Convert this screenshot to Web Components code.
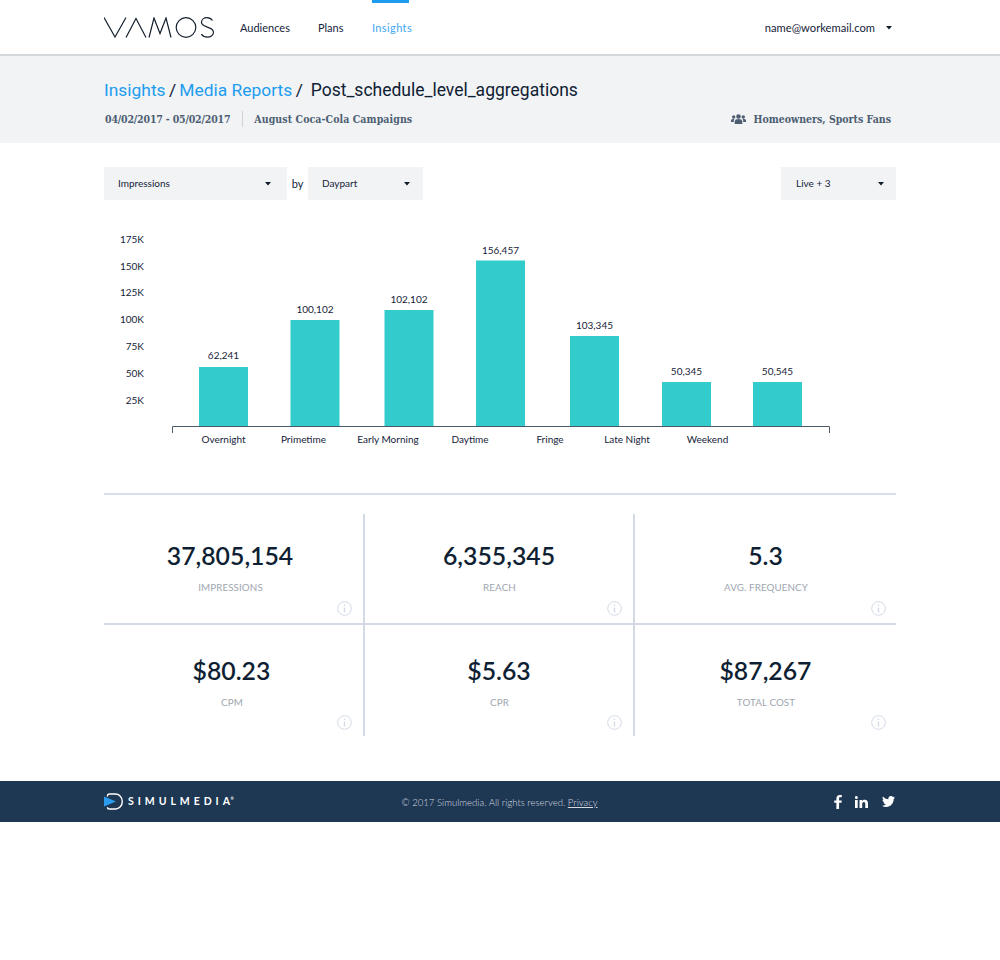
<!DOCTYPE html>
<html><head><meta charset="utf-8"><title>Vamos</title>
<style>
html,body{margin:0;padding:0;background:#fff}
body{font-family:Lato,"Liberation Sans",sans-serif;color:#0f1f33}
</style></head><body>
<app-header></app-header>
<page-title></page-title>
<main-panel>
  <control-bar></control-bar>
  <bar-chart></bar-chart>
  <stat-grid>
    <stat-cell value="37,805,154" label="IMPRESSIONS" shift="7"></stat-cell>
    <stat-cell value="6,355,345" label="REACH"></stat-cell>
    <stat-cell value="5.3" label="AVG. FREQUENCY" last></stat-cell>
    <stat-cell value="$80.23" label="CPM" shift="4" lower></stat-cell>
    <stat-cell value="$5.63" label="CPR" lower></stat-cell>
    <stat-cell value="$87,267" label="TOTAL COST" last lower></stat-cell>
  </stat-grid>
</main-panel>
<app-footer></app-footer>
<script>
const caret=`<svg width="6" height="4" viewBox="0 0 6 4" style="display:block;flex:none"><path d="M0 0h6L3 3.500z" fill="#111c2b"/></svg>`;
function def(name,html){
  customElements.define(name,class extends HTMLElement{
    constructor(){super();this.attachShadow({mode:'open'}).innerHTML=typeof html==='function'?html(this):html;}
  });
}
def('app-header',`<style>
:host{display:block;height:54px;border-bottom:2px solid #d5d8da;background:#fff}
.w{height:54px;margin:0 104px;display:flex;align-items:stretch;font:11px/1 Lato,sans-serif;color:#16233a;width:792px}
svg.logo{display:block;margin-top:17px;width:110px;height:21px;flex:none}
nav{display:flex;margin-left:26px}
nav a{display:block;padding-top:22px;margin-right:28px;position:relative;height:32px;box-sizing:border-box;font-size:11px}
nav a.on{color:#3ea6f2;letter-spacing:.38px;margin-left:.5px}
nav a.on::before{content:"";position:absolute;left:0;width:37px;top:0;height:3px;background:#1e9cf0}
.u{margin-left:auto;display:flex;align-items:center;gap:11px;height:56px;padding-right:4px;font-size:11.2px;box-sizing:border-box}
</style><div class="w">
<svg class="logo" viewBox="0 0 110 21" fill="none" stroke="#14202f" stroke-width="1.2"><path d="M0 .5l11 19.500L22 .5"/><path d="M22 20.500L32 1.500l10 19"/><path d="M45 20.500L50 1l6 15.500L62 1l5 19.500"/><circle cx="82" cy="10.500" r="9.800"/><path d="M108.500 3.500c-1.500-2-3.500-2.800-5.500-2.800-3 0-5.500 1.700-5.500 4.600 0 6.200 12 3.300 12 10 0 2.800-2.800 4.900-6 4.900-2.500 0-4.700-1-6.200-3"/></svg>
<nav><a>Audiences</a><a>Plans</a><a class="on">Insights</a></nav>
<div class="u"><span>name@workemail.com</span>${caret}</div></div>`);
def('page-title',`<style>
:host{display:block;background:#f1f3f5;height:87px;padding:0 104px}
.c{font:400 17.400px/21px Roboto,sans-serif;padding-top:24px;color:#0f2033;white-space:pre;height:21px}
.c a{color:#1e9cf0}
.c i{font-style:normal;margin:0 -.8px}
.c a+i+a{margin-left:-.5px}
.c b{font-weight:400;font-size:17.500px;margin-left:.1px}
.s{display:flex;align-items:center;margin-top:10px;font:bold 10.500px/16px "DejaVu Serif Condensed","DejaVu Serif",serif;font-stretch:condensed;color:#4d5e72;white-space:nowrap}
.d{padding-left:1px;padding-right:12px;border-right:1px solid #cdd2d8;letter-spacing:-.18px}
.a{margin-left:11px;letter-spacing:.08px}
.r{margin-left:auto;display:flex;align-items:center;gap:7px;padding-right:5px}
svg{display:block;flex:none}
</style>
<div class="c"><a>Insights</a> <i>/</i> <a>Media Reports</a> <i>/</i>  <b>Post_schedule_level_aggregations</b></div>
<div class="s"><span class="d">04/02/2017 - 05/02/2017</span><span class="a">August Coca-Cola Campaigns</span>
<span class="r"><svg width="15" height="10" viewBox="0 0 15 10" fill="#4d5e72"><circle cx="7.500" cy="2.500" r="2.300"/><path d="M3.700 10V7.500C3.700 5.800 5.500 5 7.500 5s3.800.8 3.800 2.500V10z"/><circle cx="2.700" cy="3" r="1.700"/><path d="M0 8V6.500C0 5.300 1.200 4.900 2.700 4.900c.3 0 .5 0 .7.100-.4.500-.6 1.200-.6 2V8z"/><circle cx="12.300" cy="3" r="1.700"/><path d="M15 8V6.500c0-1.200-1.200-1.600-2.700-1.600-.3 0-.5 0-.7.100.4.500.6 1.200.6 2V8z"/></svg><span>Homeowners, Sports Fans</span></span></div>`);
def('main-panel',`<style>:host{display:block;padding:24px 104px 0;box-sizing:border-box;height:638px}</style><slot></slot>`);
def('select-box',h=>`<style>
:host{display:flex;align-items:center;justify-content:space-between;box-sizing:border-box;height:33px;background:#f1f3f5;padding:0 ${h.getAttribute('pr')}px 0 ${h.getAttribute('pl')||14}px;font:10px/1 Lato,sans-serif;color:#16233a;width:${h.getAttribute('w')}px}
span{position:relative;top:-1px}
</style><span>${h.getAttribute('t')}</span>${caret}`);
def('control-bar',`<style>
:host{display:flex;align-items:center;font:11px/1 Lato,sans-serif;color:#16233a;height:33px}
.by{width:21px;text-align:center}
.sp{margin-left:auto}
</style><select-box w="183" pr="16" t="Impressions"></select-box><span class="by">by</span><select-box w="115" pr="13" t="Daypart"></select-box><span class="sp"></span><select-box w="115" pr="12" pl="15" t="Live + 3"></select-box>`);
(function(){
 const bars=[[199,367,'62,241',358.5],[290.500,320,'100,102',312.5],[384.500,310,'102,102',302.5],[476,260.500,'156,457',254],[570,336,'103,345',328.5],[662,382,'50,345',374.5],[753,382,'50,545',374.5]];
 const ys=[['175K',239],['150K',266],['125K',292.500],['100K',319],['75K',346.500],['50K',373.500],['25K',400]];
 const xs=[['Overnight',223.500],['Primetime',303.500],['Early Morning',388],['Daytime',470],['Fringe',550],['Late Night',627],['Weekend',707.500]];
 const Y=-200,X=-104;
 let s='';
 for(const[x,y,t,ty]of bars){s+=`<rect x="${x+X}" y="${y+Y}" width="49" height="${426-y}" fill="#33cccc"/><text x="${x+X+24.500}" y="${ty+Y}" text-anchor="middle">${t}</text>`}
 for(const[t,y]of ys)s+=`<text x="${144+X}" y="${y+Y+3.500}" text-anchor="end">${t}</text>`;
 for(const[t,x]of xs)s+=`<text x="${x+X}" y="${443+Y}" text-anchor="middle">${t}</text>`;
 s+=`<path d="M${172.500+X} ${433+Y}v-6.500h657v6.500" fill="none" stroke="#4b5a68" stroke-width="1"/>`;
 def('bar-chart',`<style>:host{display:block;height:293px;border-bottom:2px solid #dadeea}svg{display:block;font:10px Lato,sans-serif;fill:#16233a}</style><svg width="792" height="293" viewBox="0 0 792 293">${s}</svg>`);
})();
def('stat-grid',`<style>:host{display:grid;grid-template-columns:261px 270px 261px;grid-template-rows:111px 111px;margin-top:19px}</style><slot></slot>`);
def('stat-cell',h=>{
 const lower=h.hasAttribute('lower'),last=h.hasAttribute('last'),shift=h.getAttribute('shift')||0;
 return `<style>
:host{display:block;position:relative;box-sizing:border-box;text-align:center;${last?'':'border-right:2px solid #d3d9e5;'}${lower?'':'border-bottom:2px solid #d3d9e5;'}padding-right:${shift}px;padding-top:${lower?31:27}px}
.v{font:600 24.800px/30px Lato,sans-serif;color:#0f1f33}
.l{font:400 9.800px/12px Lato,sans-serif;color:#a0a6b0;margin-top:10px;letter-spacing:.1px;padding-left:1px}
svg{position:absolute;right:${last?10:11}px;bottom:${lower?6.5:7.5}px;display:block}
</style><div class="v">${h.getAttribute('value')}</div><div class="l">${h.getAttribute('label')}</div>
<svg width="15" height="15" viewBox="0 0 15 15" fill="none" stroke="#d3d9e5"><circle cx="7.500" cy="7.500" r="6.800"/><path d="M7.500 6.500v5M7.500 3.500v1.500" stroke-width="1.400"/></svg>`;
});
def('app-footer',`<style>
:host{display:flex;align-items:center;height:41px;background:#1e3752;padding:0 104px;color:#d5dbe1;font:300 9.600px/1 Lato,sans-serif;white-space:nowrap}
.logo{display:flex;align-items:center;gap:5px;width:300px;color:#fff;font:700 10.500px/1 Lato,sans-serif;letter-spacing:3.950px}
.logo i{font-style:normal;letter-spacing:0}
.m{flex:1;text-align:center;padding-top:2px}
.m u{text-decoration:underline}
.so{display:flex;align-items:center;gap:13.500px;width:300px;justify-content:flex-end;padding-right:1px}
svg{display:block;flex:none}
sup{font-size:4px;letter-spacing:0;vertical-align:top;margin-left:.5px;line-height:6px}
</style>
<div class="logo"><svg width="19" height="17" viewBox="0 0 19 17"><path d="M3.500 3.500V2.800C3.500 1.500 4.500 1 5.500 1h6c3.800 0 6.800 3.300 6.800 7.500S15.300 16 11.500 16h-6c-1 0-2-.5-2-1.800" fill="none" stroke="#fff" stroke-width="1.400"/><path d="M0 3.500l12 5-12 5z" fill="#2a9df0"/></svg><span>SIMULMEDI<i>A</i><sup>®</sup></span></div>
<div class="m">© 2017 Simulmedia. All rights reserved. <u>Privacy</u></div>
<div class="so">
<svg width="8" height="14" viewBox="0 0 7 13" fill="#fff"><path d="M2 13V7.200H0V5h2V3.200C2 1.200 3.200 0 5 0c.8 0 1.500 0 2 .1v2H5.700C4.700 2.100 4.500 2.600 4.500 3.300V5H7l-.3 2.200H4.500V13z"/></svg>
<svg width="13" height="12" viewBox="0 0 13 12" fill="#fff"><rect x="0" y="4" width="2.700" height="8"/><circle cx="1.350" cy="1.500" r="1.500"/><path d="M4.500 4h2.600v1.100C7.600 4.300 8.500 3.800 9.700 3.800 12 3.800 13 5.200 13 7.500V12h-2.700V8c0-1.200-.4-2-1.400-2S7.200 6.800 7.200 8v4H4.500z"/></svg>
<svg width="13" height="11" viewBox="0 0 24 20" fill="#fff"><path d="M24 2.400c-.9.400-1.800.7-2.800.8 1-.6 1.800-1.600 2.200-2.700-1 .6-2 1-3.100 1.200C19.300.7 18 0 16.600 0c-3.200 0-5.500 3-4.800 6C7.700 5.800 4.100 3.800 1.700.9.400 3.100 1 6 3.200 7.500c-.8 0-1.600-.2-2.200-.6 0 2.300 1.600 4.400 3.900 4.900-.7.200-1.500.2-2.200.1.600 2 2.400 3.400 4.600 3.400C5.200 17.400 2.600 18.100 0 17.800 2.200 19.200 4.800 20 7.500 20c9.100 0 14.300-7.700 14-14.600 1-.7 1.800-1.600 2.500-3z"/></svg>
</div>`);
</script>
</body></html>
